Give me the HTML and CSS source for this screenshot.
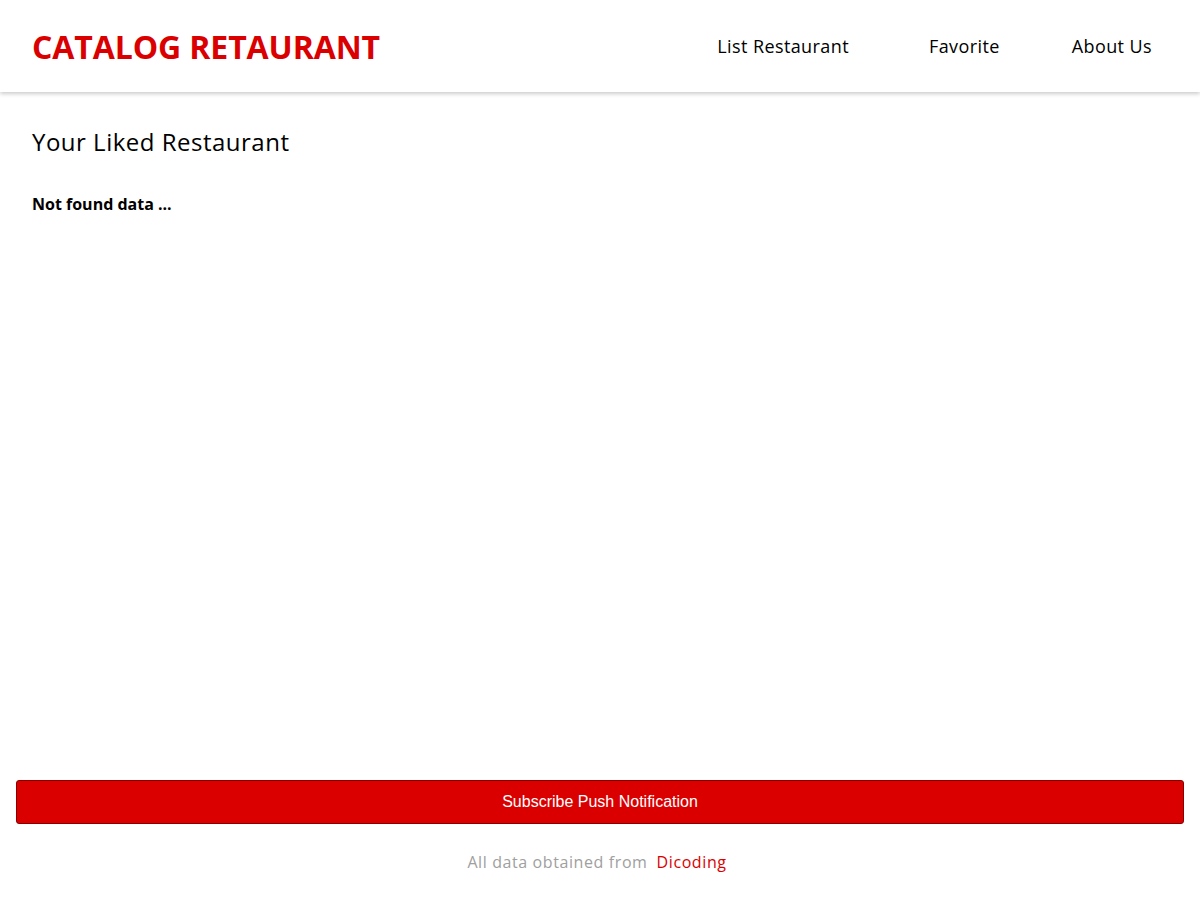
FILE: index.html
```html
<!DOCTYPE html>
<html lang="en">
<head>
<meta charset="utf-8">
<title>Catalog Retaurant</title>
<link rel="stylesheet" href="styles.css">
</head>
<body>
<header class="app-bar">
  <h1 class="brand">CATALOG RETAURANT</h1>
  <nav class="nav">
    <a class="nav-link" href="#">List Restaurant</a>
    <a class="nav-link nav-fav" href="#">Favorite</a>
    <a class="nav-link nav-about" href="#">About Us</a>
  </nav>
</header>
<main class="content">
  <h2 class="title">Your Liked Restaurant</h2>
  <p class="empty">Not found data ...</p>
</main>
<div class="subscribe-wrap">
  <button class="subscribe">Subscribe Push Notification</button>
</div>
<footer class="footer">
  <span class="footer-text">All data obtained from</span>
  <a class="footer-link" href="#">Dicoding</a>
</footer>
</body>
</html>
```
FILE: styles.css
```css
* { box-sizing: border-box; }
html, body { margin: 0; padding: 0; }
body {
  font-family: "Open Sans", "Noto Sans", sans-serif;
  color: #000;
  background: #fff;
  min-height: 900px;
  display: flex;
  flex-direction: column;
}
.app-bar {
  height: 92px;
  display: flex;
  align-items: center;
  justify-content: space-between;
  padding: 0 48px 0 32px;
  box-shadow: 0 2px 4px rgba(0,0,0,0.2);
}
.brand {
  margin: 0;
  font-size: 32px;
  font-weight: 700;
  color: #db0000;
  letter-spacing: -0.1px;
}
.nav {
  display: flex;
}
.nav-link {
  color: #000;
  text-decoration: none;
  font-size: 18px;
  letter-spacing: 0.4px;
}
.nav-fav { margin-left: 80px; }
.nav-about { margin-left: 72px; }
.content {
  flex: 1;
  padding: 0 32px;
}
.title {
  margin: 33px 0 0;
  font-size: 24px;
  font-weight: 400;
  letter-spacing: 0.5px;
}
.empty {
  margin: 35px 0 0;
  font-size: 16px;
  font-weight: 700;
}
.subscribe-wrap {
  padding: 0 16px;
}
.subscribe {
  width: 100%;
  height: 44px;
  background: #db0000;
  color: #fff;
  border: 1px solid #8a0000;
  border-radius: 3px;
  font-family: "Liberation Sans", Arial, sans-serif;
  font-size: 16px;
}
.footer {
  height: 76px;
  display: flex;
  justify-content: center;
  align-items: center;
  gap: 9px;
  font-size: 16px;
  letter-spacing: 0.6px;
  padding-right: 6px;
}
.footer-text { color: #a0a0a0; }
.footer-link { color: #db0000; text-decoration: none; }
```
